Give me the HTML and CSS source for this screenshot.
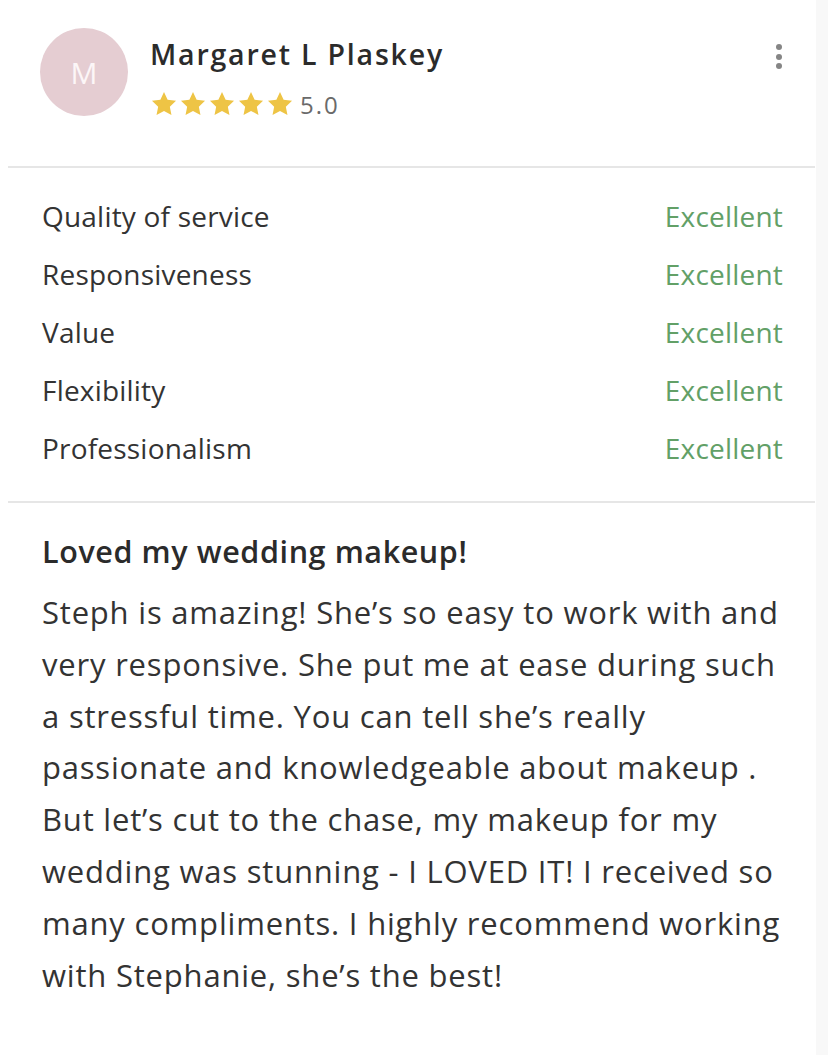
FILE: index.html
```html
<!DOCTYPE html>
<html>
<head>
<meta charset="utf-8">
<link rel="stylesheet" href="styles.css">
</head>
<body>
<div class="page">
  <div class="card">
    <header class="head">
      <div class="avatar">M</div>
      <div class="who">
        <div class="name">Margaret L Plaskey</div>
        <div class="rating">
          <span class="stars">
            <svg viewBox="0 0 24 24" class="star"><path d="M12 1.8l3.1 6.6 7.2.9-5.3 5 1.4 7.1L12 17.9l-6.4 3.5 1.4-7.1-5.3-5 7.2-.9z"/></svg>
            <svg viewBox="0 0 24 24" class="star"><path d="M12 1.8l3.1 6.6 7.2.9-5.3 5 1.4 7.1L12 17.9l-6.4 3.5 1.4-7.1-5.3-5 7.2-.9z"/></svg>
            <svg viewBox="0 0 24 24" class="star"><path d="M12 1.8l3.1 6.6 7.2.9-5.3 5 1.4 7.1L12 17.9l-6.4 3.5 1.4-7.1-5.3-5 7.2-.9z"/></svg>
            <svg viewBox="0 0 24 24" class="star"><path d="M12 1.8l3.1 6.6 7.2.9-5.3 5 1.4 7.1L12 17.9l-6.4 3.5 1.4-7.1-5.3-5 7.2-.9z"/></svg>
            <svg viewBox="0 0 24 24" class="star"><path d="M12 1.8l3.1 6.6 7.2.9-5.3 5 1.4 7.1L12 17.9l-6.4 3.5 1.4-7.1-5.3-5 7.2-.9z"/></svg>
          </span>
          <span class="score">5.0</span>
        </div>
      </div>
      <div class="more"><span></span><span></span><span></span></div>
    </header>
    <section class="scores">
      <div class="row"><span>Quality of service</span><span class="val">Excellent</span></div>
      <div class="row"><span>Responsiveness</span><span class="val">Excellent</span></div>
      <div class="row"><span>Value</span><span class="val">Excellent</span></div>
      <div class="row"><span>Flexibility</span><span class="val">Excellent</span></div>
      <div class="row"><span>Professionalism</span><span class="val">Excellent</span></div>
    </section>
    <section class="review">
      <h2 class="title">Loved my wedding makeup!</h2>
      <p class="body">Steph is amazing! She’s so easy to work with and very responsive. She put me at ease during such a stressful time. You can tell she’s really passionate and knowledgeable about makeup . But let’s cut to the chase, my makeup for my wedding was stunning - I LOVED IT! I received so many compliments. I highly recommend working with Stephanie, she’s the best!</p>
    </section>
  </div>
</div>
</body>
</html>
```

FILE: styles.css
```css
html, body {
  margin: 0;
  padding: 0;
  background: #ffffff;
}
.page {
  width: 828px;
  height: 1055px;
  overflow: hidden;
  background: linear-gradient(to right, #ffffff 816px, #f8f8f8 816px);
  font-family: "Open Sans", "Noto Sans", sans-serif;
  color: #333333;
}
.card {
  width: 807px;
  margin-left: 8px;
}
.head {
  display: flex;
  align-items: flex-start;
  padding: 28px 0 0 32px;
  height: 168px;
  box-sizing: border-box;
  border-bottom: 2px solid #e6e6e6;
}
.avatar {
  width: 88px;
  height: 88px;
  border-radius: 50%;
  background: #e5cdd2;
  color: #fcf6f7;
  font-size: 30px;
  font-weight: 400;
  display: flex;
  align-items: center;
  justify-content: center;
  flex-shrink: 0;
}
.who {
  margin-left: 22px;
  flex: 1;
}
.name {
  font-size: 28.5px;
  font-weight: 600;
  color: #2b2b2b;
  line-height: 1;
  margin-top: 12px;
  letter-spacing: 1.8px;
}
.rating {
  display: flex;
  align-items: center;
  margin-top: 19px;
}
.stars {
  display: flex;
  gap: 1px;
}
.star {
  width: 28px;
  height: 28px;
  fill: #eec445;
}
.score {
  margin-left: 6px;
  font-size: 24px;
  letter-spacing: 2px;
  color: #6a6a6a;
}
.more {
  display: flex;
  flex-direction: column;
  gap: 3.5px;
  margin: 16px 33px 0 0;
}
.more span {
  width: 6px;
  height: 6px;
  border-radius: 50%;
  background: #858585;
}
.scores {
  padding: 19px 32px 24px 34px;
  border-bottom: 2px solid #e6e6e6;
}
.row {
  display: flex;
  justify-content: space-between;
  height: 58px;
  align-items: center;
  font-size: 28px;
  letter-spacing: 0.2px;
  color: #333333;
}
.val {
  color: #62a067;
}
.review {
  padding: 18px 25px 0 34px;
}
.title {
  margin: 12px 0 18px;
  font-size: 30.5px;
  font-weight: 600;
  letter-spacing: 0.6px;
  color: #2b2b2b;
  line-height: 36px;
}
.body {
  margin: 0;
  font-size: 31px;
  letter-spacing: 0.8px;
  line-height: 51.8px;
  color: #333333;
}
```
